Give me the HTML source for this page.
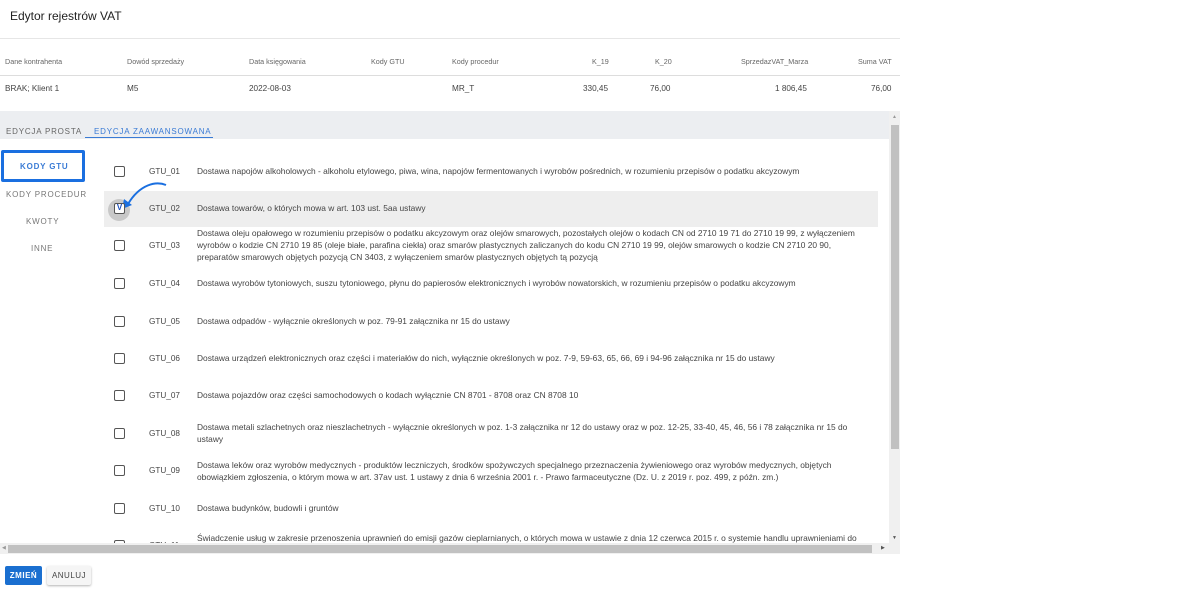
<!DOCTYPE html>
<html><head><meta charset="utf-8"><style>
*{margin:0;padding:0;box-sizing:border-box}
body{width:1181px;height:591px;background:#fff;font-family:"Liberation Sans",Arial,sans-serif;color:#333;position:relative;overflow:hidden}
.a{position:absolute;white-space:nowrap}
.h{font-size:7.2px;color:#666}
.c{font-size:8.2px;color:#444}
.t{font-size:8.4px;color:#444;line-height:12px}
.cb{position:absolute;left:114px;width:11px;height:11px;border:1.5px solid #555;border-radius:2px;background:#fff}
.code{position:absolute;left:149px;font-size:8.2px;color:#444}
</style></head><body>
<div class="a" style="left:10px;top:9px;font-size:12px;color:#222">Edytor rejestrów VAT</div>
<div class="a" style="left:0;top:38px;width:900px;height:1px;background:#e6e6e6"></div>
<div class="a h" style="left:5px;top:57px">Dane kontrahenta</div>
<div class="a h" style="left:127px;top:57px">Dowód sprzedaży</div>
<div class="a h" style="left:249px;top:57px">Data księgowania</div>
<div class="a h" style="left:371px;top:57px">Kody GTU</div>
<div class="a h" style="left:452px;top:57px">Kody procedur</div>
<div class="a h" style="left:592px;top:57px">K_19</div>
<div class="a h" style="left:655px;top:57px">K_20</div>
<div class="a h" style="left:741px;top:57px">SprzedazVAT_Marza</div>
<div class="a h" style="left:858px;top:57px">Suma VAT</div>
<div class="a" style="left:0;top:75px;width:900px;height:1px;background:#ddd"></div>
<div class="a c" style="left:5px;top:84px">BRAK; Klient 1</div>
<div class="a c" style="left:127px;top:84px">M5</div>
<div class="a c" style="left:249px;top:84px">2022-08-03</div>
<div class="a c" style="left:452px;top:84px">MR_T</div>
<div class="a c" style="left:583px;top:84px">330,45</div>
<div class="a c" style="left:650px;top:84px">76,00</div>
<div class="a c" style="left:775px;top:84px">1 806,45</div>
<div class="a c" style="left:871px;top:84px">76,00</div>
<div class="a" style="left:0;top:111px;width:890px;height:28px;background:#eceef1"></div>
<div class="a" style="left:6px;top:127px;font-size:8px;letter-spacing:.8px;color:#666">EDYCJA PROSTA</div>
<div class="a" style="left:94px;top:127px;font-size:8px;letter-spacing:.8px;color:#3a7bd5">EDYCJA ZAAWANSOWANA</div>
<div class="a" style="left:85px;top:137px;width:128px;height:1px;background:#3a7bd5"></div>
<div class="a" style="left:1px;top:150px;width:84px;height:32px;border:3px solid #1a6fe0;border-radius:2px"></div>
<div class="a" style="left:20px;top:162px;font-size:8px;letter-spacing:.8px;color:#3a7bd5;font-weight:bold">KODY GTU</div>
<div class="a" style="left:6px;top:190px;font-size:8px;letter-spacing:.8px;color:#777">KODY PROCEDUR</div>
<div class="a" style="left:26px;top:217px;font-size:8px;letter-spacing:.8px;color:#777">KWOTY</div>
<div class="a" style="left:31px;top:244px;font-size:8px;letter-spacing:.8px;color:#777">INNE</div>
<div class="a" style="left:104px;top:191px;width:774px;height:36px;background:#eeeeee"></div>
<div class="a" style="left:108px;top:199px;width:22px;height:22px;border-radius:50%;background:#c8c8c8"></div>
<svg class="a" style="left:118px;top:180px" width="52" height="34" viewBox="0 0 52 34"><path d="M48 5 C38 1 22 4 10 24" fill="none" stroke="#1a6fe0" stroke-width="2"/><path d="M4 29 L6 19 L14 25 Z" fill="#1a6fe0"/></svg>
<div class="cb" style="top:166px"></div>
<div class="cb" style="top:203px;color:#1a4fbf;font-size:8px;line-height:8px;text-align:center;font-weight:bold">V</div>
<div class="cb" style="top:240px"></div><div class="cb" style="top:278px"></div><div class="cb" style="top:316px"></div><div class="cb" style="top:353px"></div><div class="cb" style="top:390px"></div><div class="cb" style="top:428px"></div><div class="cb" style="top:465px"></div><div class="cb" style="top:503px"></div><div class="cb" style="top:540px"></div>
<div class="code" style="top:167px">GTU_01</div><div class="code" style="top:204px">GTU_02</div><div class="code" style="top:241px">GTU_03</div><div class="code" style="top:279px">GTU_04</div><div class="code" style="top:317px">GTU_05</div><div class="code" style="top:354px">GTU_06</div><div class="code" style="top:391px">GTU_07</div><div class="code" style="top:429px">GTU_08</div><div class="code" style="top:466px">GTU_09</div><div class="code" style="top:504px">GTU_10</div><div class="code" style="top:541px">GTU_11</div>
<div class="a t" style="left:197px;top:165px">Dostawa napojów alkoholowych - alkoholu etylowego, piwa, wina, napojów fermentowanych i wyrobów pośrednich, w rozumieniu przepisów o podatku akcyzowym</div>
<div class="a t" style="left:197px;top:202px">Dostawa towarów, o których mowa w art. 103 ust. 5aa ustawy</div>
<div class="a t" style="left:197px;top:227px">Dostawa oleju opałowego w rozumieniu przepisów o podatku akcyzowym oraz olejów smarowych, pozostałych olejów o kodach CN od 2710 19 71 do 2710 19 99, z wyłączeniem<br>wyrobów o kodzie CN 2710 19 85 (oleje białe, parafina ciekła) oraz smarów plastycznych zaliczanych do kodu CN 2710 19 99, olejów smarowych o kodzie CN 2710 20 90,<br>preparatów smarowych objętych pozycją CN 3403, z wyłączeniem smarów plastycznych objętych tą pozycją</div>
<div class="a t" style="left:197px;top:277px">Dostawa wyrobów tytoniowych, suszu tytoniowego, płynu do papierosów elektronicznych i wyrobów nowatorskich, w rozumieniu przepisów o podatku akcyzowym</div>
<div class="a t" style="left:197px;top:315px">Dostawa odpadów - wyłącznie określonych w poz. 79-91 załącznika nr 15 do ustawy</div>
<div class="a t" style="left:197px;top:352px">Dostawa urządzeń elektronicznych oraz części i materiałów do nich, wyłącznie określonych w poz. 7-9, 59-63, 65, 66, 69 i 94-96 załącznika nr 15 do ustawy</div>
<div class="a t" style="left:197px;top:389px">Dostawa pojazdów oraz części samochodowych o kodach wyłącznie CN 8701 - 8708 oraz CN 8708 10</div>
<div class="a t" style="left:197px;top:421px">Dostawa metali szlachetnych oraz nieszlachetnych - wyłącznie określonych w poz. 1-3 załącznika nr 12 do ustawy oraz w poz. 12-25, 33-40, 45, 46, 56 i 78 załącznika nr 15 do<br>ustawy</div>
<div class="a t" style="left:197px;top:459px">Dostawa leków oraz wyrobów medycznych - produktów leczniczych, środków spożywczych specjalnego przeznaczenia żywieniowego oraz wyrobów medycznych, objętych<br>obowiązkiem zgłoszenia, o którym mowa w art. 37av ust. 1 ustawy z dnia 6 września 2001 r. - Prawo farmaceutyczne (Dz. U. z 2019 r. poz. 499, z późn. zm.)</div>
<div class="a t" style="left:197px;top:502px">Dostawa budynków, budowli i gruntów</div>
<div class="a t" style="left:197px;top:532px">Świadczenie usług w zakresie przenoszenia uprawnień do emisji gazów cieplarnianych, o których mowa w ustawie z dnia 12 czerwca 2015 r. o systemie handlu uprawnieniami do</div>
<div class="a" style="left:889px;top:111px;width:11px;height:433px;background:#f0f0f0"></div>
<div class="a" style="left:891px;top:125px;width:8px;height:324px;background:#c1c1c1"></div>
<div class="a" style="left:892px;top:114px;font-size:5px;color:#999">▲</div>
<div class="a" style="left:892px;top:535px;font-size:5px;color:#555">▼</div>
<div class="a" style="left:0;top:543px;width:900px;height:11px;background:#f0f0f0"></div>
<div class="a" style="left:8px;top:545px;width:864px;height:8px;background:#c1c1c1"></div>
<div class="a" style="left:2px;top:545px;font-size:5px;color:#999">◀</div>
<div class="a" style="left:881px;top:545px;font-size:5px;color:#555">▶</div>
<div class="a" style="left:5px;top:566px;width:37px;height:19px;background:#1a6fd0;border-radius:2px;color:#fff;font-size:8px;font-weight:bold;text-align:center;line-height:19px;letter-spacing:.5px">ZMIEŃ</div>
<div class="a" style="left:47px;top:566px;width:44px;height:19px;background:#f5f5f5;border-radius:2px;box-shadow:0 1px 2px rgba(0,0,0,.3);color:#444;font-size:8px;text-align:center;line-height:19px;letter-spacing:.5px">ANULUJ</div>
</body></html>
